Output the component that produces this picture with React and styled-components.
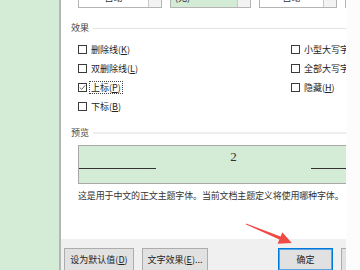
import React from "react";
import styled, { createGlobalStyle } from "styled-components";

const GREEN = "#d4ebd5";
const FONT = `"Noto Sans CJK SC", "Microsoft YaHei", sans-serif`;

const Global = createGlobalStyle`
  html, body { margin: 0; padding: 0; }
  body {
    width: 360px;
    height: 270px;
    overflow: hidden;
    background: #fbfbfb;
    font-family: ${FONT};
  }
`;

const Page = styled.div`
  position: relative;
  display: flex;
  width: 360px;
  height: 270px;
  overflow: hidden;
`;

const GreenStrip = styled.div`
  width: 59px;
  flex-shrink: 0;
  background: ${GREEN};
`;

const Dialog = styled.div`
  width: 287px;
  flex-shrink: 0;
  box-sizing: border-box;
  border-left: 2px solid #b5b5b5;
  background: #fff;
  display: flex;
  flex-direction: column;
  overflow: hidden;
`;

const Outside = styled.div`
  flex: 1;
  background: #fcfcfc;
`;

const Content = styled.div`
  flex: 1;
  padding-left: 10px;
  display: flex;
  flex-direction: column;
`;

const DropRow = styled.div`
  display: flex;
  gap: 8px;
  margin-top: -12px;
  margin-left: 7px;
  height: 20px;
  flex-shrink: 0;
`;

const Dropdown = styled.div`
  width: ${(p) => p.$w}px;
  flex-shrink: 0;
  height: 20px;
  box-sizing: border-box;
  border: 1px solid #b4b4b4;
  background: ${(p) => (p.$green ? GREEN : "#fff")};
  display: flex;
  font-size: 9px;
  color: #333;
`;

const DropText = styled.div`
  flex: 1;
  line-height: 18px;
  text-align: ${(p) => (p.$left ? "left" : "center")};
  padding-left: ${(p) => (p.$left ? "4px" : "0")};
  white-space: nowrap;
  overflow: hidden;
`;

const DropArrow = styled.div`
  width: 13px;
  box-sizing: border-box;
  border-left: 1px solid #c8c8c8;
  background: #f3f3f3;
`;

const SectionHeading = styled.div`
  display: flex;
  align-items: center;
  gap: 4px;
  margin-top: ${(p) => p.$mt}px;
  height: 12px;
  line-height: 12px;
  font-size: 9px;
  color: #444;
  white-space: nowrap;
  flex-shrink: 0;

  &::after {
    content: "";
    flex: 1;
    height: ${(p) => (p.$thick ? 2 : 1)}px;
    background: ${(p) => (p.$thick ? "#eeeeee" : "#e2e2e2")};
  }
`;

const CheckArea = styled.div`
  display: flex;
  margin-top: 6px;
  margin-left: 7px;
  flex-shrink: 0;
`;

const CheckColumn = styled.div`
  display: flex;
  flex-direction: column;
  width: ${(p) => (p.$w ? `${p.$w}px` : "auto")};
  flex-shrink: 0;
`;

const CheckItem = styled.div`
  display: flex;
  align-items: center;
  gap: 4px;
  height: 19px;
  font-size: 9px;
  color: #222;
  white-space: nowrap;
`;

const Box = styled.span`
  width: 9px;
  height: 9px;
  box-sizing: border-box;
  border: 1px solid #3a3a3a;
  background: #fff;
  display: inline-flex;
  flex-shrink: 0;
`;

const Label = styled.span`
  line-height: 11px;
  padding: 0 1px;
  margin: 0 -2px 0 -2px;
  border: 1px solid ${(p) => (p.$focus ? "transparent" : "transparent")};
  ${(p) => p.$focus && "border: 1px dotted #444;"}
`;

const PreviewBox = styled.div`
  margin-left: 7px;
  margin-top: 6px;
  width: 310px;
  height: 39px;
  box-sizing: border-box;
  border: 1px solid #a8a8a8;
  background: ${GREEN};
  display: grid;
  grid-template-columns: 77px 1fr 76px;
  flex-shrink: 0;
`;

const PreviewLine = styled.div`
  height: 1px;
  margin-top: 22px;
  background: #333;
`;

const Digit = styled.div`
  font-family: "Liberation Serif", serif;
  font-size: 13px;
  line-height: 22px;
  text-align: center;
  color: #333;
`;

const Description = styled.div`
  margin-left: 7px;
  margin-top: 6px;
  font-size: 9px;
  line-height: 12px;
  letter-spacing: -0.15px;
  color: #333;
  white-space: nowrap;
  flex-shrink: 0;
`;

const BottomBar = styled.div`
  height: 31px;
  flex-shrink: 0;
  background: #f0f0f0;
  display: flex;
  gap: 8px;
  padding: 9px 0 0 3px;
  box-sizing: border-box;
`;

const Button = styled.button`
  width: ${(p) => p.$w}px;
  margin-left: ${(p) => p.$ml || 0}px;
  flex-shrink: 0;
  height: 23px;
  box-sizing: border-box;
  padding: 0;
  border: 1px solid ${(p) => (p.$primary ? "#0078d7" : "#adadad")};
  box-shadow: ${(p) => (p.$primary ? "inset 0 0 0 1px #5aa5e6" : "none")};
  background: #e1e1e1;
  font-family: ${FONT};
  font-size: 9px;
  color: #222;
  white-space: nowrap;
`;

const ArrowOverlay = styled.svg`
  position: absolute;
  left: 0;
  top: 0;
  pointer-events: none;
`;

function Check({ checked }) {
  return (
    <Box>
      {checked && (
        <svg width="7" height="7" viewBox="0 0 7 7">
          <path d="M0.8 3.6 L2.7 5.4 L6.3 1.2" fill="none" stroke="#555" strokeWidth="0.9" />
        </svg>
      )}
    </Box>
  );
}

function Option({ checked, focus, children }) {
  return (
    <CheckItem>
      <Check checked={checked} />
      <Label $focus={focus}>{children}</Label>
    </CheckItem>
  );
}

export default function App() {
  return (
    <>
      <Global />
      <Page>
        <GreenStrip />
        <Dialog>
          <Content>
            <DropRow>
              <Dropdown $w={84}>
                <DropText>自动</DropText>
                <DropArrow />
              </Dropdown>
              <Dropdown $w={81} $green>
                <DropText $left>(无)</DropText>
                <DropArrow />
              </Dropdown>
              <Dropdown $w={78}>
                <DropText>自动</DropText>
                <DropArrow />
              </Dropdown>
              <Dropdown $w={40} $green>
                <DropText />
              </Dropdown>
            </DropRow>

            <SectionHeading $mt={14}>效果</SectionHeading>

            <CheckArea>
              <CheckColumn $w={213}>
                <Option>删除线(<u>K</u>)</Option>
                <Option>双删除线(<u>L</u>)</Option>
                <Option checked focus>上标(<u>P</u>)</Option>
                <Option>下标(<u>B</u>)</Option>
              </CheckColumn>
              <CheckColumn>
                <Option>小型大写字母(<u>M</u>)</Option>
                <Option>全部大写字母(<u>A</u>)</Option>
                <Option>隐藏(<u>H</u>)</Option>
              </CheckColumn>
            </CheckArea>

            <SectionHeading $mt={11} $thick>预览</SectionHeading>

            <PreviewBox>
              <PreviewLine />
              <Digit>2</Digit>
              <PreviewLine />
            </PreviewBox>

            <Description>这是用于中文的正文主题字体。当前文档主题定义将使用哪种字体。</Description>
          </Content>

          <BottomBar>
            <Button $w={70}>设为默认值(<u>D</u>)</Button>
            <Button $w={66}>文字效果(<u>E</u>)...</Button>
            <Button $w={55} $ml={62} $primary>确定</Button>
            <Button $w={55}>取消</Button>
          </BottomBar>
        </Dialog>
        <Outside />
        <ArrowOverlay width="360" height="270" viewBox="0 0 360 270">
          <polygon
            points="246,223.6 280.6,236.6 282.3,232.3 291.8,242.9 277.6,243.7 279.4,239.4 246,224.4"
            fill="#f04a45"
          />
        </ArrowOverlay>
      </Page>
    </>
  );
}
